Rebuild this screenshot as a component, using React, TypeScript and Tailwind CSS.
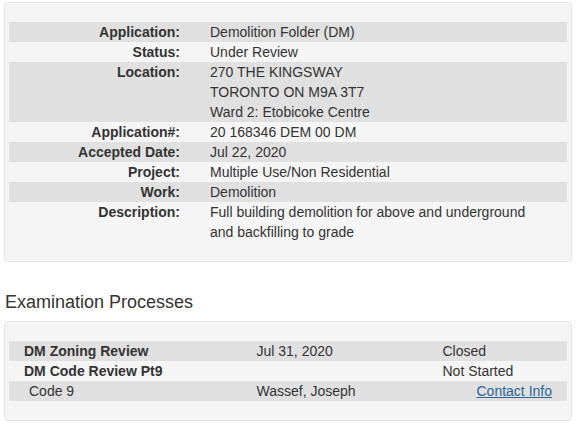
import { FC } from "react";

interface Field {
  label: string;
  value: string[];
}

const fields: Field[] = [
  { label: "Application:", value: ["Demolition Folder (DM)"] },
  { label: "Status:", value: ["Under Review"] },
  {
    label: "Location:",
    value: ["270 THE KINGSWAY", "TORONTO ON M9A 3T7", "Ward 2: Etobicoke Centre"],
  },
  { label: "Application#:", value: ["20 168346 DEM 00 DM"] },
  { label: "Accepted Date:", value: ["Jul 22, 2020"] },
  { label: "Project:", value: ["Multiple Use/Non Residential"] },
  { label: "Work:", value: ["Demolition"] },
  {
    label: "Description:",
    value: ["Full building demolition for above and underground", "and backfilling to grade"],
  },
];

interface Process {
  name: string;
  date: string;
  status: string;
  bold?: boolean;
  contact?: boolean;
}

const processes: Process[] = [
  { name: "DM Zoning Review", date: "Jul 31, 2020", status: "Closed", bold: true },
  { name: "DM Code Review Pt9", date: "", status: "Not Started", bold: true },
  { name: "Code 9", date: "Wassef, Joseph", status: "Contact Info", contact: true },
];

const App: FC = () => {
  return (
    <div
      className="w-[577px] h-[426px] bg-white text-[#333] text-[14px] leading-[20px] pt-[2px] px-[4px]"
      style={{ fontFamily: '"Liberation Sans", Arial, Helvetica, sans-serif' }}
    >
      <div className="w-[568px] bg-[#f5f5f5] border border-[#e3e3e3] rounded-[4px] p-[19px]">
        <div className="-mx-[15px]">
          {fields.map((f, i) => (
            <div
              key={f.label}
              className={`grid grid-cols-12 ${i % 2 === 0 && i < 7 ? "bg-[#e0e0e0]" : ""}`}
            >
              <div className="col-span-4 px-[15px] text-right font-bold">{f.label}</div>
              <div className="col-span-8 px-[15px]">
                {f.value.map((line) => (
                  <div key={line}>{line}</div>
                ))}
              </div>
            </div>
          ))}
        </div>
      </div>

      <h3 className="mt-[30px] mb-[9px] ml-[1px] text-[18px] leading-[20px] font-normal">
        Examination Processes
      </h3>

      <div className="w-[568px] bg-[#f5f5f5] border border-[#e3e3e3] rounded-[4px] p-[19px]">
        <div className="-mx-[15px]">
          {processes.map((p, i) => (
            <div key={p.name} className={`grid grid-cols-12 ${i % 2 === 0 ? "bg-[#e0e0e0]" : ""}`}>
              <div className={`col-span-5 px-[15px] ${p.bold ? "font-bold" : "pl-[20px]"}`}>
                {p.name}
              </div>
              <div className="col-span-4 px-[15px]">{p.date}</div>
              <div className={`col-span-3 px-[15px] ${p.contact ? "text-right" : ""}`}>
                {p.contact ? (
                  <a href="#" className="text-[#2a6496] underline">
                    {p.status}
                  </a>
                ) : (
                  p.status
                )}
              </div>
            </div>
          ))}
        </div>
      </div>
    </div>
  );
};

export default App;
